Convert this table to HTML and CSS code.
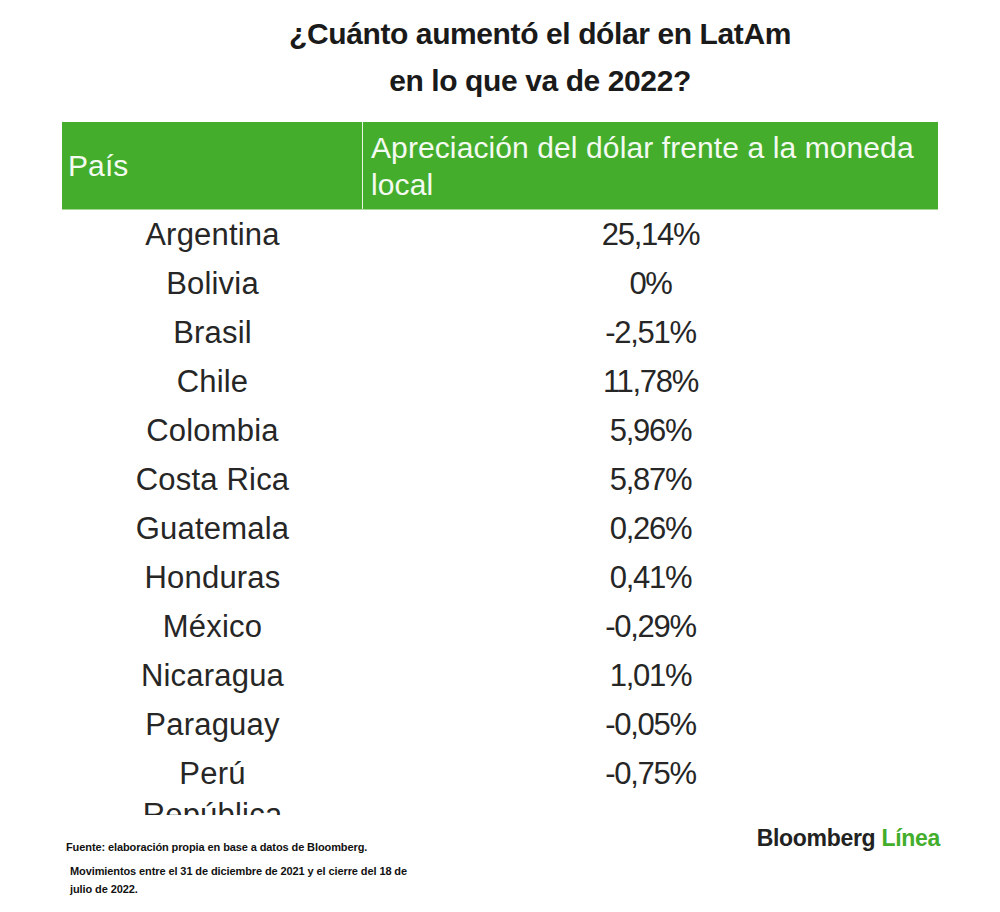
FILE: index.html
```html
<!DOCTYPE html>
<html lang="es">
<head>
<meta charset="utf-8">
<title>¿Cuánto aumentó el dólar en LatAm en lo que va de 2022?</title>
<link rel="stylesheet" href="styles.css">
</head>
<body>
<div class="page">
  <h1 class="title">¿Cuánto aumentó el dólar en LatAm<br>en lo que va de 2022?</h1>
  <div class="table-wrap">
    <div class="thead">
      <div class="th th-country">País</div>
      <div class="th th-value">Apreciación del dólar frente a la moneda local</div>
    </div>
    <div class="tbody">
      <div class="row"><div class="td">Argentina</div><div class="td val">25,14%</div></div>
      <div class="row"><div class="td">Bolivia</div><div class="td val">0%</div></div>
      <div class="row"><div class="td">Brasil</div><div class="td val">-2,51%</div></div>
      <div class="row"><div class="td">Chile</div><div class="td val">11,78%</div></div>
      <div class="row"><div class="td">Colombia</div><div class="td val">5,96%</div></div>
      <div class="row"><div class="td">Costa Rica</div><div class="td val">5,87%</div></div>
      <div class="row"><div class="td">Guatemala</div><div class="td val">0,26%</div></div>
      <div class="row"><div class="td">Honduras</div><div class="td val">0,41%</div></div>
      <div class="row"><div class="td">México</div><div class="td val">-0,29%</div></div>
      <div class="row"><div class="td">Nicaragua</div><div class="td val">1,01%</div></div>
      <div class="row"><div class="td">Paraguay</div><div class="td val">-0,05%</div></div>
      <div class="row"><div class="td">Perú</div><div class="td val">-0,75%</div></div>
      <div class="row"><div class="td">República Dominicana</div><div class="td val">-1,12%</div></div>
    </div>
  </div>
  <div class="footer">
    <div class="notes">
      <p class="note note-source">Fuente: elaboración propia en base a datos de Bloomberg.</p>
      <p class="note note-period">Movimientos entre el 31 de diciembre de 2021 y el cierre del 18 de<br>julio de 2022.</p>
    </div>
    <div class="logo"><span class="logo-b">Bloomberg</span> <span class="logo-l">Línea</span></div>
  </div>
</div>
</body>
</html>
```
FILE: styles.css
```css
html, body {
  margin: 0;
  padding: 0;
  background: #ffffff;
}
body {
  font-family: "Liberation Sans", Arial, Helvetica, sans-serif;
  color: #1e1e1e;
}
.page {
  width: 1000px;
  height: 912px;
  overflow: hidden;
}
.title {
  margin: 0;
  padding: 10px 0 0 80px;
  text-align: center;
  font-size: 30px;
  line-height: 47px;
  font-weight: 700;
  letter-spacing: -0.4px;
  color: #1a1a1a;
}
.table-wrap {
  margin: 18px 62px 0 62px;
  width: 876px;
  height: 693px;
  overflow: hidden;
}
.thead {
  display: grid;
  grid-template-columns: 301px 575px;
  height: 88px;
  background: #44ae2c;
  border-bottom: 1px solid #a3d993;
  box-sizing: border-box;
}
.th {
  color: #f4faf1;
  font-size: 30px;
  line-height: 37px;
  letter-spacing: 0.1px;
  display: flex;
  align-items: center;
}
.th-country {
  padding-left: 6px;
  border-right: 1px solid #e8f5e2;
}
.th-value {
  padding-left: 8px;
  padding-right: 10px;
}
.row {
  display: grid;
  grid-template-columns: 301px 575px;
  height: 49px;
}
.td {
  display: flex;
  align-items: center;
  justify-content: center;
  text-align: center;
  font-size: 31px;
  line-height: 33px;
  color: #262626;
  letter-spacing: 0.2px;
}
.td.val {
  letter-spacing: -1.3px;
}
.row .td:first-child {
  padding: 0 20px;
}
.footer {
  display: flex;
  justify-content: space-between;
  align-items: flex-start;
  padding: 6px 60px 0 66px;
}
.note {
  margin: 0;
  font-weight: 700;
  font-size: 11px;
  letter-spacing: -0.1px;
  color: #111;
}
.note-source {
  margin-top: 20px;
}
.note-period {
  margin-top: 9px;
  margin-left: 4px;
  line-height: 18px;
}
.logo {
  font-weight: 700;
  font-size: 23px;
  letter-spacing: -0.3px;
  line-height: 26px;
  margin-top: 4px;
}
.logo-b {
  color: #222222;
}
.logo-l {
  color: #43ad2c;
}
```
